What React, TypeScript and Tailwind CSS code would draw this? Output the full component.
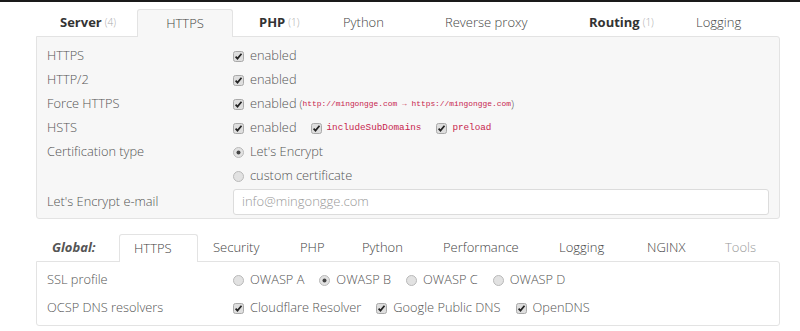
import React from "react";

const font = { fontFamily: '"Open Sans", "Liberation Sans", sans-serif' };
const mono = { fontFamily: '"Liberation Mono", monospace' };

function Check() {
  return (
    <svg width="11" height="11" viewBox="0 0 11 11" className="shrink-0">
      <rect x="0.5" y="0.5" width="10" height="10" rx="2" fill="#dedede" stroke="#a9a9a9" />
      <path d="M2.6 5.6 L4.5 7.6 L8.5 2.8" fill="none" stroke="#222" strokeWidth="1.7" />
    </svg>
  );
}

function Radio({ on }: { on?: boolean }) {
  return (
    <svg width="11" height="11" viewBox="0 0 11 11" className="shrink-0">
      <circle cx="5.5" cy="5.5" r="5" fill="#e2e2e2" stroke="#b9b9b9" />
      {on && <circle cx="5.5" cy="5.5" r="2" fill="#444" />}
    </svg>
  );
}

function Row({ label, children, h = "h-[24px]" }: { label?: string; children: React.ReactNode; h?: string }) {
  return (
    <div className={`grid grid-cols-[186px_1fr] items-center ${h}`}>
      <div>{label}</div>
      <div className="flex items-center">{children}</div>
    </div>
  );
}

export default function App() {
  return (
    <div className="w-[800px] h-[331px] bg-white text-[12.8px] font-light text-[#555] overflow-hidden" style={font}>
      <div className="h-[2px] bg-[#1a1a1a]" />

      {/* Site tabs */}
      <div className="pl-[36px] pr-[20px] pt-[7px]">
        <div className="flex h-[27px] text-[13px] text-[#444]">
          <div className="w-[101px] pl-[24px] flex items-center">
            <b className="text-[#333] font-bold">Server</b>
            <span className="ml-[3px] text-[10px] text-[#aaa]">(4)</span>
          </div>
          <div className="relative z-10 w-[96px] flex items-center justify-center bg-[#f7f7f7] border border-b-0 border-[#e3e3e3] rounded-t-[3px] h-[28px]">
            HTTPS
          </div>
          <div className="w-[87px] pl-[26px] flex items-center">
            <b className="text-[#333] font-bold">PHP</b>
            <span className="ml-[3px] text-[10px] text-[#aaa]">(1)</span>
          </div>
          <div className="w-[100px] pl-[23px] flex items-center">Python</div>
          <div className="w-[145px] pl-[25px] flex items-center">Reverse proxy</div>
          <div className="w-[107px] pl-[24px] flex items-center">
            <b className="text-[#333] font-bold">Routing</b>
            <span className="ml-[3px] text-[10px] text-[#aaa]">(1)</span>
          </div>
          <div className="pl-[24px] flex items-center">Logging</div>
        </div>

        <div className="bg-[#f7f7f7] border border-[#e3e3e3] rounded-b-[3px] rounded-tr-[3px] px-[10px] pt-[7px] pb-[3px]">
          <Row label="HTTPS">
            <Check />
            <span className="ml-[6px]">enabled</span>
          </Row>
          <Row label="HTTP/2">
            <Check />
            <span className="ml-[6px]">enabled</span>
          </Row>
          <Row label="Force HTTPS">
            <Check />
            <span className="ml-[6px]">enabled</span>
            <span className="ml-[3px] text-[11px]">(</span>
            <span className="text-[#c7254e] text-[7.9px] font-normal" style={mono}>
              http://mingongge.com → https://mingongge.com
            </span>
            <span className="text-[11px]">)</span>
          </Row>
          <Row label="HSTS">
            <Check />
            <span className="ml-[6px]">enabled</span>
            <span className="ml-[14px]"><Check /></span>
            <span className="ml-[5px] text-[#c7254e] text-[9.3px] font-normal" style={mono}>
              includeSubDomains
            </span>
            <span className="ml-[15px]"><Check /></span>
            <span className="ml-[5px] text-[#c7254e] text-[9.3px] font-normal" style={mono}>
              preload
            </span>
          </Row>
          <Row label="Certification type">
            <Radio on />
            <span className="ml-[6px]">Let's Encrypt</span>
          </Row>
          <Row>
            <Radio />
            <span className="ml-[6px]">custom certificate</span>
          </Row>
          <div className="grid grid-cols-[186px_1fr] items-center mt-[1px]">
            <div>Let's Encrypt e-mail</div>
            <div className="h-[26px] bg-white border border-[#dcdcdc] rounded-[3px] flex items-center pl-[8px] text-[#999] text-[13px]">
              info@mingongge.com
            </div>
          </div>
        </div>
      </div>

      {/* Global tabs */}
      <div className="pl-[36px] pr-[20px] pt-[15px]">
        <div className="flex h-[27px] text-[13px] text-[#444]">
          <div className="w-[83px] pl-[16px] flex items-center font-bold italic text-[#555]">Global:</div>
          <div className="relative z-10 w-[79px] pl-[14px] flex items-center bg-white border border-b-0 border-[#e3e3e3] rounded-t-[3px] h-[28px]">
            HTTPS
          </div>
          <div className="w-[87px] pl-[15px] flex items-center">Security</div>
          <div className="w-[62px] pl-[15px] flex items-center">PHP</div>
          <div className="w-[81px] pl-[15px] flex items-center">Python</div>
          <div className="w-[116px] pl-[15px] flex items-center">Performance</div>
          <div className="w-[88px] pl-[15px] flex items-center">Logging</div>
          <div className="w-[78px] pl-[15px] flex items-center">NGINX</div>
          <div className="pl-[15px] flex items-center text-[#999]">Tools</div>
        </div>

        <div className="bg-white border border-[#e3e3e3] rounded-b-[3px] rounded-tr-[3px] px-[10px] pt-[4px] pb-[3px]">
          <Row label="SSL profile" h="h-[28px]">
            <Radio />
            <span className="ml-[6px]">OWASP A</span>
            <span className="ml-[15px]"><Radio on /></span>
            <span className="ml-[6px]">OWASP B</span>
            <span className="ml-[15px]"><Radio /></span>
            <span className="ml-[6px]">OWASP C</span>
            <span className="ml-[15px]"><Radio /></span>
            <span className="ml-[6px]">OWASP D</span>
          </Row>
          <Row label="OCSP DNS resolvers" h="h-[28px]">
            <Check />
            <span className="ml-[6px]">Cloudflare Resolver</span>
            <span className="ml-[15px]"><Check /></span>
            <span className="ml-[6px]">Google Public DNS</span>
            <span className="ml-[15px]"><Check /></span>
            <span className="ml-[6px]">OpenDNS</span>
          </Row>
        </div>
      </div>
    </div>
  );
}
